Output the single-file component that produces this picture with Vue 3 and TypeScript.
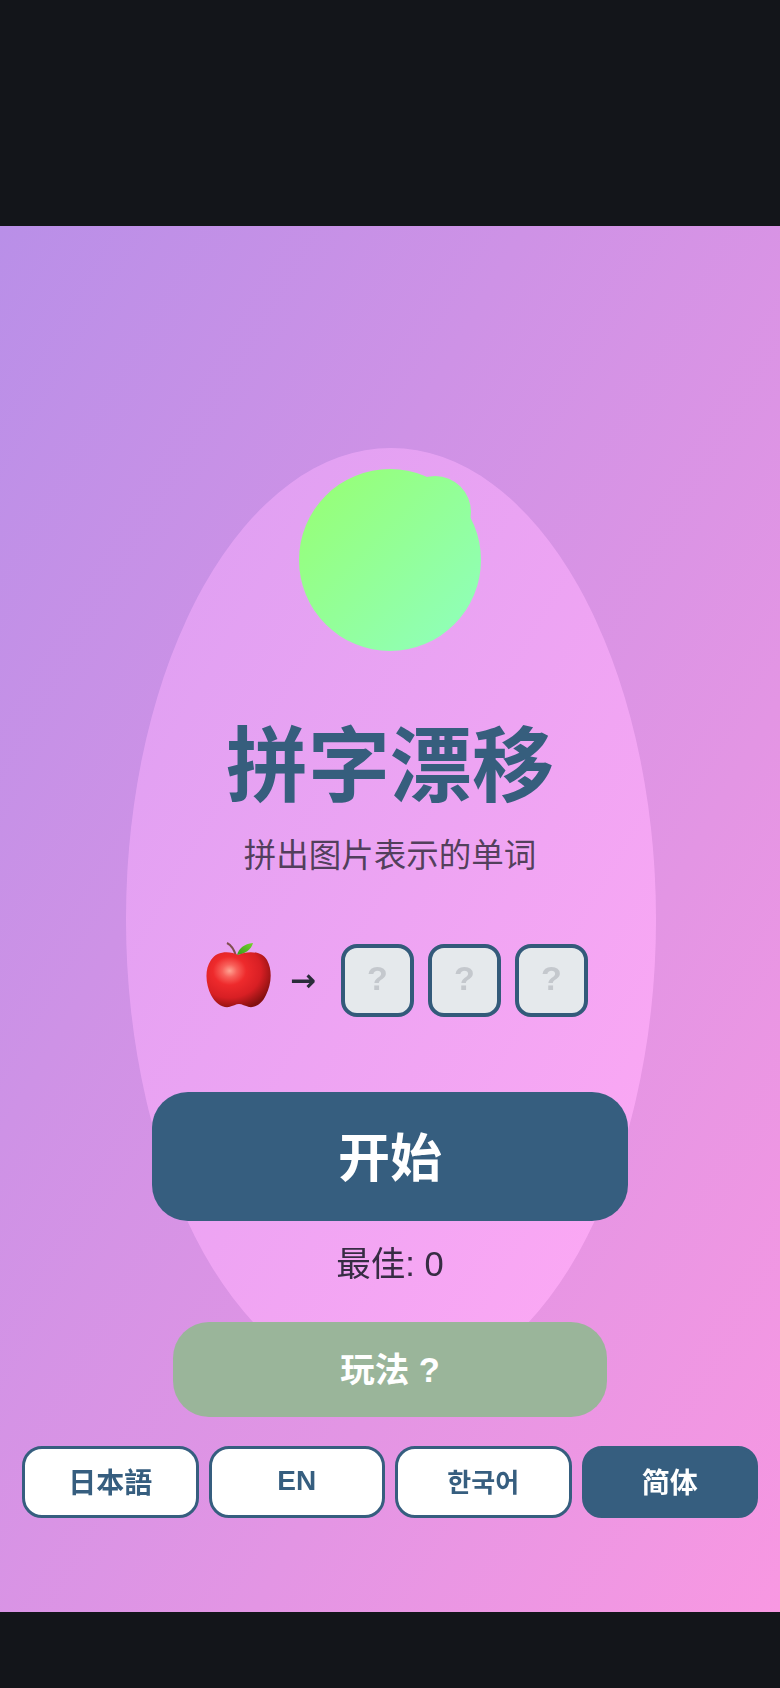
<script setup lang="ts">
const langs = [
  { label: '日本語', active: false, ko: false },
  { label: 'EN', active: false, ko: false },
  { label: '한국어', active: false, ko: true },
  { label: '简体', active: true, ko: false },
]
const slots = ['?', '?', '?']
</script>

<template>
  <div class="screen">
    <main class="stage">
      <div class="content">
        <div class="oval"></div>
        <svg class="orb" viewBox="0 0 182 182" aria-hidden="true">
          <defs>
            <linearGradient id="orbfill" gradientUnits="userSpaceOnUse" x1="27" y1="27" x2="155" y2="155">
              <stop offset="0" stop-color="#96ff7c" />
              <stop offset="1" stop-color="#90ffb4" />
            </linearGradient>
          </defs>
          <circle cx="91" cy="91" r="91" fill="url(#orbfill)" />
          <circle cx="136" cy="43" r="36" fill="url(#orbfill)" />
        </svg>
        <h1 class="title">拼字漂移</h1>
        <p class="sub">拼出图片表示的单词</p>
        <div class="demo">
          <svg class="apple" viewBox="0 0 66 66" aria-hidden="true">
            <defs>
              <radialGradient id="apbody" cx="0.36" cy="0.34" r="0.72">
                <stop offset="0" stop-color="#ffa493" />
                <stop offset="0.16" stop-color="#f8605a" />
                <stop offset="0.36" stop-color="#ee2a2c" />
                <stop offset="0.68" stop-color="#d81f24" />
                <stop offset="1" stop-color="#84100f" />
              </radialGradient>
              <linearGradient id="lf" x1="0" y1="1" x2="1" y2="0">
                <stop offset="0" stop-color="#3a9a1e" />
                <stop offset="1" stop-color="#74d42a" />
              </linearGradient>
            </defs>
            <path d="M21 0 C25 2 28 6 30 13" fill="none" stroke="#80504f" stroke-width="2" />
            <path d="M31 12 C33 5 38 1 47 0 C45 7 39 11 31 12 Z" fill="url(#lf)" />
            <path d="M32 12 C40 8 55 7 61 17 C67 28 65 42 60 52 C56 61 49 65 43 64 C39 63 36 61 33 61 C30 61 27 63 23 64 C16 65 9 60 5 52 C0 42 -2 27 5 17 C11 7 25 8 32 12 Z" fill="url(#apbody)" />
          </svg>
          <span class="arrow">→</span>
          <div class="slots">
            <div v-for="(s, i) in slots" :key="i" class="slot"><span class="mark">{{ s }}</span></div>
          </div>
        </div>
        <button class="start"><span class="label">开始</span></button>
        <p class="best">最佳: 0</p>
        <button class="help"><span class="label">玩法 ?</span></button>
        <div class="langs">
          <button
            v-for="l in langs"
            :key="l.label"
            class="lang"
            :class="{ active: l.active, ko: l.ko }"
          >{{ l.label }}</button>
        </div>
      </div>
    </main>
  </div>
</template>

<style>
html, body { margin: 0; background: #13151a; }
</style>

<style scoped>
.screen {
  width: 780px;
  height: 1688px;
  padding: 226px 0 76px;
  box-sizing: border-box;
  background: #13151a;
  font-family: "Liberation Sans", "Noto Sans CJK SC", "Noto Sans CJK KR", sans-serif;
}
.stage {
  height: 1386px;
  background: linear-gradient(120deg, #b98fe8 0%, #f898e2 100%);
  overflow: hidden;
}
.content {
  position: relative;
  height: 100%;
  display: flex;
  flex-direction: column;
  align-items: center;
  padding-top: 243px;
  box-sizing: border-box;
  filter: blur(0.6px);
}
.oval {
  position: absolute;
  left: 126px;
  top: 222px;
  width: 530px;
  height: 943px;
  border-radius: 50%;
  background: linear-gradient(120deg, #dc9ff2 0%, #ffa9f4 100%);
}
.orb {
  position: relative;
  width: 182px;
  height: 182px;
  flex: none;
  overflow: visible;
}
.title {
  position: relative;
  margin: 62px 0 0;
  font-size: 82px;
  line-height: 108px;
  font-weight: 700;
  color: #365e7d;
}
.sub {
  position: relative;
  margin: 13px 0 0;
  font-size: 32.5px;
  line-height: 44px;
  color: rgba(40, 36, 50, 0.8);
}
.demo {
  position: relative;
  display: flex;
  align-items: center;
  margin: 65px 0 0 14px;
}
.apple {
  width: 66px;
  height: 66px;
  flex: none;
  margin-bottom: 8px;
  overflow: visible;
}
.arrow {
  width: 26px;
  margin: 0 25px 0 18px;
  flex: none;
  display: flex;
  justify-content: center;
  font-family: "DejaVu Sans", sans-serif;
  font-size: 31px;
  line-height: 1;
  font-weight: 700;
  color: #2a2c3a;
}
.slots { display: flex; gap: 14px; }
.slot {
  width: 73px;
  height: 73px;
  box-sizing: border-box;
  border: 4px solid #335a7a;
  border-radius: 16px;
  background: #e5e9ec;
  color: #c4c8cd;
  font-size: 34px;
  font-weight: 700;
  display: flex;
  align-items: center;
  justify-content: center;
}
.mark { margin-bottom: 3px; }
button { font-family: inherit; cursor: pointer; }
.label { display: block; margin-top: -4px; }
.start {
  position: relative;
  margin-top: 75px;
  width: 476px;
  height: 129px;
  flex: none;
  border: 0;
  border-radius: 36px;
  background: #365e7f;
  color: #fff;
  font-size: 52px;
  font-weight: 700;
}
.best {
  position: relative;
  margin: 20px 0 0;
  font-size: 34.5px;
  line-height: 46px;
  color: rgba(38, 34, 52, 0.92);
}
.help {
  position: relative;
  margin-top: 35px;
  width: 434px;
  height: 95px;
  flex: none;
  border: 0;
  border-radius: 36px;
  background: #9ab59a;
  color: #fff;
  font-size: 34.5px;
  font-weight: 700;
}
.help .label { margin-top: -6px; }
.langs {
  position: relative;
  display: flex;
  gap: 10px;
  margin-top: 29px;
}
.lang {
  width: 176.5px;
  height: 72px;
  box-sizing: border-box;
  border: 3px solid #365e7f;
  border-radius: 20px;
  background: #fff;
  color: #365e7f;
  font-size: 28px;
  font-weight: 700;
  padding: 0 0 3px;
}
.lang.ko { font-size: 26px; }
.lang.active {
  background: #365e7f;
  color: #fff;
}
</style>
